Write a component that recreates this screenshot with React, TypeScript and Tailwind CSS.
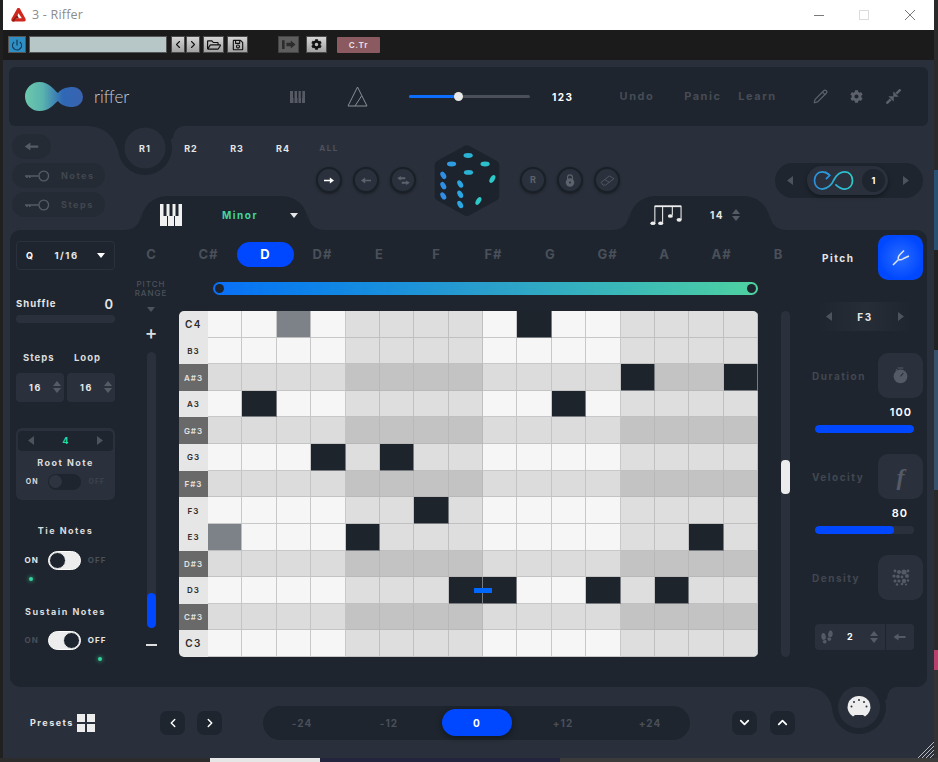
import { ReactNode } from "react";
import { FaCog, FaRegFolderOpen, FaRegSave } from "react-icons/fa";
import { IoFootsteps } from "react-icons/io5";
import { LuChevronLeft, LuChevronRight, LuChevronDown, LuChevronUp, LuPencil, LuPower } from "react-icons/lu";

const keys = ["C", "C#", "D", "D#", "E", "F", "F#", "G", "G#", "A", "A#", "B"];
const rows = ["C4", "B3", "A#3", "A3", "G#3", "G3", "F#3", "F3", "E3", "D#3", "D3", "C#3", "C3"];
const darkCells = ["0-9", "2-12", "2-15", "3-1", "3-10", "5-3", "5-5", "7-6", "8-4", "8-14", "10-7", "10-8", "10-11", "10-13"];
const greyCells = ["0-2", "8-0"];

const cellColor = (row: number, col: number) => {
  const key = `${row}-${col}`;
  if (darkCells.includes(key)) return "bg-[#1d242c] border-[#777b80]";
  if (greyCells.includes(key)) return "bg-[#7d8188] border-[#bdbdbd]";
  const sharp = rows[row].includes("#");
  const shaded = col % 8 >= 4;
  if (sharp) return shaded ? "bg-[#c3c3c3] border-[#b8b8b8]" : "bg-[#dcdcdc] border-[#c4c4c4]";
  return shaded ? "bg-[#dedede] border-[#c0c0c0]" : "bg-[#f6f6f6] border-[#c8c8c8]";
};

const Caret = ({ dir = "down", className = "" }: { dir?: "down" | "up" | "left" | "right"; className?: string }) => {
  const points = { down: "0,0 8,0 4,5", up: "0,5 8,5 4,0", left: "6,0 6,9 0,4.5", right: "0,0 6,4.5 0,9" }[dir];
  const box = dir === "left" || dir === "right" ? "0 0 6 9" : "0 0 8 5";
  const size = dir === "left" || dir === "right" ? "w-[6px] h-[9px]" : "w-[8px] h-[5px]";
  return (
    <svg viewBox={box} className={`${size} ${className}`} fill="currentColor">
      <polygon points={points} />
    </svg>
  );
};

const UpDown = () => (
  <div className="flex flex-col gap-[2px] text-[#565c66]">
    <Caret dir="up" className="w-[6px] h-[4px]" />
    <Caret dir="down" className="w-[6px] h-[4px]" />
  </div>
);

const Label = ({ children, className = "" }: { children: ReactNode; className?: string }) => (
  <span className={`text-[10px] font-bold tracking-[1.5px] leading-none whitespace-nowrap ${className}`}>{children}</span>
);

const Fillet = ({ side }: { side: "left" | "right" }) => (
  <svg
    viewBox="0 0 18 18"
    className={`absolute bottom-0 w-[18px] h-[18px] text-[#1e252e] ${side === "left" ? "-left-[18px]" : "-right-[18px]"}`}
    fill="currentColor"
  >
    {side === "left" ? <path d="M18 0 C18 12 12 18 0 18 H18 Z" /> : <path d="M0 0 C0 12 6 18 18 18 H0 Z" />}
  </svg>
);

const ToolBtn = ({ children, className = "w-[14px]" }: { children: ReactNode; className?: string }) => (
  <div className={`h-[17px] flex items-center justify-center border border-[#4a4a4a] bg-linear-to-b from-[#d6d6d6] to-[#a2a2a2] text-[#111] ${className}`}>
    {children}
  </div>
);

const RoundBtn = ({ children }: { children: ReactNode }) => (
  <div className="w-[26px] h-[26px] rounded-full bg-[#2b313c] border-[2px] border-[#1a2027] shadow-[0_1px_3px_rgba(0,0,0,0.4)] flex items-center justify-center text-[#5d636d]">
    {children}
  </div>
);

const SmallArrow = ({ className = "" }: { className?: string }) => (
  <svg viewBox="0 0 12 8" className={`w-[10px] h-[7px] ${className}`} fill="currentColor">
    <path d="M0 4 L5 0.5 V3 H12 V5 H5 V7.5 Z" />
  </svg>
);

const KeyPill = ({ label }: { label: string }) => (
  <div className="w-[93px] h-[25px] rounded-full bg-[#252b35] flex items-center pl-[13px] gap-[11px]">
    <svg viewBox="0 0 26 12" className="w-[25px] h-[12px] text-[#565c66]" fill="none" stroke="currentColor">
      <path d="M0 6 H14 M2 6 V8 M5 6 V8" strokeWidth="1.6" />
      <circle cx="19.5" cy="6" r="5" strokeWidth="1.4" />
    </svg>
    <Label className="text-[#41474f] text-[9px]! tracking-[1.4px]">{label}</Label>
  </div>
);

const Toggle = ({ on, dim = false }: { on: boolean; dim?: boolean }) => (
  <div
    className={`w-[33px] rounded-full flex items-center ${on ? "justify-start" : "justify-end"} ${
      dim ? "h-[16px] bg-[#1e252e]" : "h-[19px] bg-[#ededed] border border-white"
    }`}
  >
    <div className={`rounded-full ${dim ? "w-[13px] h-[13px] ml-[1px] bg-[#2f3540]" : "w-[17px] h-[17px] bg-[#1e252e] border border-[#ededed]"}`} />
  </div>
);

const Led = ({ className = "" }: { className?: string }) => (
  <div className={`w-[4px] h-[4px] rounded-full bg-[#35d49c] shadow-[0_0_4px_#35d49c] ${className}`} />
);

const IconBox = ({ children }: { children: ReactNode }) => (
  <div className="w-[45px] h-[45px] rounded-[10px] bg-[#2b313c] flex items-center justify-center text-[#555b66]">{children}</div>
);

const Bar = ({ value }: { value: number }) => (
  <div className="ml-[4px] w-[99px] h-[8px] rounded-full bg-[#2b313c] overflow-hidden">
    <div className="h-full rounded-full bg-[#0048ff]" style={{ width: `${value}%` }} />
  </div>
);

const Dice = () => {
  const top = [[476, 89], [426, 115], [527, 115], [477, 140]];
  const left = [[401, 149], [401, 180], [401, 211], [452, 175], [452, 206], [452, 237]];
  const right = [[549, 160], [507, 226]];
  return (
    <svg viewBox="370 55 205 222" className="w-[68px] h-[74px]">
      <polygon points="472,72 556,118 556,212 472,258 389,212 389,118" fill="#1c232c" stroke="#1c232c" strokeWidth="28" strokeLinejoin="round" />
      {top.map(([x, y]) => <ellipse key={`${x}${y}`} cx={x} cy={y} rx="14" ry="7.5" fill={x > 500 ? "#2cc0cc" : x < 450 ? "#2f9be0" : "#2ab3d5"} />)}
      {left.map(([x, y]) => <ellipse key={`${x}${y}`} cx={x} cy={y} rx="12" ry="7.5" fill={x < 420 ? "#2f8fe4" : "#2ba6e0"} transform={`rotate(60 ${x} ${y})`} />)}
      {right.map(([x, y]) => <ellipse key={`${x}${y}`} cx={x} cy={y} rx="13" ry="7" fill="#2fc8c8" transform={`rotate(-60 ${x} ${y})`} />)}
    </svg>
  );
};

const LoopIcon = () => (
  <svg viewBox="0 0 42 20" className="w-[41px] h-[19px]" fill="none" strokeWidth="1.8">
    <defs>
      <linearGradient id="loopGrad" x1="0" x2="1" y1="0" y2="0">
        <stop offset="0" stopColor="#2a90dc" />
        <stop offset="1" stopColor="#2fc9c9" />
      </linearGradient>
    </defs>
    <path d="M17 4 C14 1.5 11 1 9 1 C4 1 1 5 1 10 C1 15 4 19 9 19 C15 19 20 13 21 10 C23 6 27 1 33 1 C38 1 41 5 41 10 C41 15 38 19 33 19 C29 19 26 17 23 14" stroke="url(#loopGrad)" />
    <path d="M12 1 L17 4.5 L13 8.5" stroke="#2a90dc" />
  </svg>
);

export default function App() {
  return (
    <div className="w-[938px] h-[762px] overflow-hidden bg-[#1c1c1c] font-['Inter',sans-serif] flex flex-col">
      <div className="flex h-[758px]">
        <div className="w-[3px] bg-[#202020]" />
        <div className="w-[931px] flex flex-col">
          {/* window title */}
          <div className="h-[30px] bg-white flex items-center pl-[8px] pr-[18px]">
            <svg viewBox="0 0 16 16" className="w-[15px] h-[16px]">
              <path d="M8 0.5 C9 0.5 9.5 1 10 2 L15.5 12 C16 13.5 15.5 15 14 15 H2 C0.5 15 0 13.5 0.5 12 L6 2 C6.5 1 7 0.5 8 0.5 Z" fill="#d0281e" />
              <path d="M8 6 L11.5 11.5 H5.5 Z" fill="#fff" />
              <path d="M1 14 L6.5 8 L8.5 11.5 H5 L3.5 15 H2 Z" fill="#8d1b14" />
            </svg>
            <span className="ml-[6px] text-[12.5px] text-[#8c8c8c] font-['Open_Sans',sans-serif] tracking-[0.2px]">3 - Riffer</span>
            <svg viewBox="0 0 102 12" className="ml-auto w-[102px] h-[12px]" fill="none">
              <path d="M0 6.5 H10" stroke="#7a7a7a" />
              <rect x="45.5" y="1.5" width="9" height="9" stroke="#dcdcdc" />
              <path d="M91 1 L101 11 M101 1 L91 11" stroke="#7a7a7a" />
            </svg>
          </div>

          {/* host toolbar */}
          <div className="h-[30px] bg-[#1b1b1b] flex items-center pl-[5px] pb-[1px]">
            <div className="w-[18px] h-[17px] flex items-center justify-center bg-[#2f8fc4] border border-[#555] text-[#123a55]">
              <LuPower size={12} strokeWidth={2.5} />
            </div>
            <div className="ml-[3px] w-[138px] h-[17px] bg-[#b7c6c6] border border-[#555]" />
            <ToolBtn className="ml-[4px] w-[14px]"><LuChevronLeft size={15} strokeWidth={2.2} /></ToolBtn>
            <ToolBtn className="ml-[1px] w-[14px]"><LuChevronRight size={15} strokeWidth={2.2} /></ToolBtn>
            <ToolBtn className="ml-[3px] w-[21px]"><FaRegFolderOpen size={14} /></ToolBtn>
            <ToolBtn className="ml-[3px] w-[21px]"><FaRegSave size={12} /></ToolBtn>
            <div className="ml-[30px] w-[21px] h-[17px] flex items-center justify-center border border-[#444] bg-[#5e5e5e] text-[#2c2c2c]">
              <svg viewBox="0 0 16 10" className="w-[14px] h-[9px]" fill="currentColor">
                <path d="M0 0 H3 V10 H0 Z M5 3 H10 V0.5 L15.5 5 L10 9.5 V7 H5 Z" />
              </svg>
            </div>
            <ToolBtn className="ml-[7px] w-[21px]"><FaCog size={11} /></ToolBtn>
            <div className="ml-[10px] w-[43px] h-[16px] flex items-center justify-center rounded-[1px] bg-[#8b5a60] text-[8px] font-bold tracking-[0.8px] text-[#e8dcdc]">C.Tr</div>
          </div>

          {/* plugin */}
          <div className="relative h-[698px] bg-[#2a303b] px-[6px] pt-[7px]">
            {/* header */}
            <div className="h-[59px] rounded-[6px] bg-[#1e252e] flex items-center">
              <svg viewBox="0 0 59 30" className="ml-[16px] w-[59px] h-[30px]">
                <defs>
                  <linearGradient id="logoGrad" x1="0" x2="1" y1="0" y2="0">
                    <stop offset="0" stopColor="#6cc8ac" />
                    <stop offset="0.3" stopColor="#5ab4ae" />
                    <stop offset="0.65" stopColor="#2f68b5" />
                    <stop offset="1" stopColor="#3a62b0" />
                  </linearGradient>
                </defs>
                <path d="M14.5 0 C24 0 28 7 33 11 C36 7 41 5 48 5 A10 10 0 0 1 48 25 C41 25 36 23 33 19 C28 23 24 29 14.5 29 A14.5 14.5 0 0 1 14.5 0 Z" fill="url(#logoGrad)" />
              </svg>
              <span className="ml-[10px] w-[36px] text-[17px] leading-none font-['Lato',sans-serif] font-light text-[#c9cdd2]">riffer</span>
              <svg viewBox="0 0 15 12" className="ml-[160px] w-[15px] h-[12px] text-[#555a63]" fill="currentColor">
                <path d="M0 0 H15 V12 H0 Z" />
                <path d="M4 12 V7 M8 12 V7 M11.5 12 V7" stroke="#1e252e" />
                <path d="M3 0 H4.5 V7 H3 Z M7 0 H8.5 V7 H7 Z M10.8 0 H12.3 V7 H10.8 Z" fill="#1e252e" />
              </svg>
              <svg viewBox="0 0 21 21" className="ml-[42px] w-[21px] h-[21px] text-[#8a8f96]" fill="none" stroke="currentColor">
                <path d="M10.5 1 L20 20 H1 Z M14.5 10 L8 20" />
              </svg>
              <div className="ml-[41px] w-[121px] h-[3px] rounded-full bg-[#4a4f5a] relative">
                <div className="h-full w-[50px] rounded-full bg-[#0d6efd]" />
                <div className="absolute left-[45px] -top-[3px] w-[9px] h-[9px] rounded-full bg-[#e8e8e8]" />
              </div>
              <Label className="ml-[22px] text-white tracking-[1.2px]">123</Label>
              <Label className="ml-[46px] text-[#474c56] text-[11px]!">Undo</Label>
              <Label className="ml-[30px] text-[#474c56] text-[11px]!">Panic</Label>
              <Label className="ml-[17px] text-[#474c56] text-[11px]!">Learn</Label>
              <LuPencil size={15} className="ml-[36px] text-[#5c616b]" />
              <FaCog size={13} className="ml-[22px] text-[#5c616b]" />
              <svg viewBox="0 0 16 16" className="ml-[23px] w-[15px] h-[15px] text-[#5c616b]" fill="currentColor" stroke="currentColor">
                <path d="M15.5 0.5 L11 5" strokeWidth="2.6" />
                <path d="M0.5 15.5 L5 11" strokeWidth="2.6" />
                <path d="M8 8 V3 L13 8 Z M8 8 H3 L8 13 Z" strokeWidth="0.5" />
              </svg>
            </div>

            {/* rack row */}
            <div className="relative h-[104px] flex">
              {/* notch behind R1 */}
              <svg viewBox="0 0 100 60" className="absolute left-[76px] top-0 w-[100px] h-[60px] text-[#1e252e]" fill="currentColor">
                <path d="M0 0 H100 Q90 0 88 12 L60 30 L33 24 C28 8 18 0 0 0 Z" />
                <circle cx="60" cy="22" r="27" />
                <circle cx="60" cy="22" r="20.5" fill="#2a303b" />
              </svg>

              <div className="w-[113px] pl-[3px] pt-[8px] flex flex-col gap-[4px]">
                <div className="w-[39px] h-[25px] rounded-full bg-[#252b35] flex items-center justify-center text-[#565c66]">
                  <SmallArrow className="w-[17px] h-[9px]" />
                </div>
                <KeyPill label="Notes" />
                <KeyPill label="Steps" />
              </div>

              <div className="relative w-[298px]">
                <div className="h-[41px] pt-[3px] grid grid-cols-[repeat(5,46px)] items-center justify-items-center">
                  {["R1", "R2", "R3", "R4"].map((r) => (
                    <Label key={r} className="text-[#e6e6e6] text-[9px]! tracking-[1px]">{r}</Label>
                  ))}
                  <Label className="text-[#4d525c] text-[8px]!">ALL</Label>
                </div>
                <div className="ml-[194px] flex gap-[11px]">
                  <RoundBtn><SmallArrow className="text-white rotate-180" /></RoundBtn>
                  <RoundBtn><SmallArrow /></RoundBtn>
                  <RoundBtn>
                    <svg viewBox="0 0 14 10" className="w-[13px] h-[9px]" fill="currentColor">
                      <path d="M0 2.5 L4 0 V1.5 H9 V3.5 H4 V5 Z M14 7.5 L10 5 V6.5 H5 V8.5 H10 V10 Z" />
                    </svg>
                  </RoundBtn>
                </div>
                <div className="relative mt-[3px] ml-[19px] w-[167px] h-[34px] pt-[4px] rounded-t-[26px] bg-[#1e252e] flex items-center">
                  <Fillet side="left" />
                  <Fillet side="right" />
                  <svg viewBox="0 0 22 22" className="ml-[19px] w-[22px] h-[22px] text-[#f0f0f0]" fill="currentColor">
                    <path d="M0 0 H22 V22 H0 Z" />
                    <path d="M3.5 0 H6.5 V12 H3.5 Z M9.5 0 H12.5 V12 H9.5 Z M15.5 0 H18.5 V12 H15.5 Z" fill="#1e252e" />
                    <path d="M7 12 H8 V22 H7 Z M14 12 H15 V22 H14 Z" fill="#1e252e" />
                  </svg>
                  <Label className="ml-[40px] text-[#43d6a0]">Minor</Label>
                  <Caret className="ml-[32px] text-[#e6e6e6]" />
                </div>
              </div>

              <div className="ml-[13px] mt-[18px] h-[74px]">
                <Dice />
              </div>

              <div className="ml-[19px] w-[250px]">
                <div className="mt-[41px] flex gap-[11px]">
                  <RoundBtn><span className="text-[9px] font-bold">R</span></RoundBtn>
                  <RoundBtn>
                    <svg viewBox="0 0 12 16" className="w-[10px] h-[13px]" fill="currentColor">
                      <path d="M3 7 V4 A3 3 0 0 1 9 4 V7" fill="none" stroke="currentColor" strokeWidth="1.4" />
                      <circle cx="6" cy="10.5" r="5.2" />
                      <circle cx="6" cy="10.5" r="1.3" fill="#2b313c" />
                    </svg>
                  </RoundBtn>
                  <RoundBtn>
                    <svg viewBox="0 0 16 12" className="w-[15px] h-[11px]" fill="none" stroke="currentColor" strokeWidth="0.8">
                      <path d="M1 8 L10 1 L15 4 L6 11 H3 Z M5 5 L10 8" />
                    </svg>
                  </RoundBtn>
                </div>
                <div className="relative mt-[3px] ml-[109px] w-[141px] h-[34px] pt-[4px] rounded-t-[26px] bg-[#1e252e] flex items-center">
                  <Fillet side="left" />
                  <Fillet side="right" />
                  <svg viewBox="0 0 34 22" className="ml-[21px] w-[33px] h-[22px] text-[#ececec]" fill="none" stroke="currentColor">
                    <path d="M5 19 V2 H32 V16 M13 19 V2 M23 11 V2" strokeWidth="1.1" />
                    <path d="M5 2 H32" strokeWidth="1.8" />
                    <g fill="currentColor" stroke="none">
                      <ellipse cx="3" cy="19.5" rx="2.6" ry="1.9" />
                      <ellipse cx="11" cy="19.5" rx="2.6" ry="1.9" />
                      <ellipse cx="21" cy="12" rx="2.6" ry="1.9" />
                      <ellipse cx="30" cy="16" rx="2.6" ry="1.9" />
                    </g>
                  </svg>
                  <Label className="ml-[27px] text-[#e6e6e6] tracking-[0.8px]">14</Label>
                  <div className="ml-[8px]"><UpDown /></div>
                </div>
              </div>

              <div className="ml-[5px] mt-[37px] w-[148px] h-[35px] rounded-full bg-[#1e252e] flex items-center text-[#4d535d]">
                <Caret dir="left" className="ml-[12px]" />
                <div className="ml-[14px] w-[81px] h-[29px] rounded-full bg-[#2b313c] shadow-[0_2px_4px_rgba(0,0,0,0.35)] flex items-center pl-[6px]">
                  <LoopIcon />
                  <div className="ml-[8px] w-[23px] h-[23px] rounded-full bg-[#1e252e] flex items-center justify-center text-[9px] font-bold text-white">1</div>
                </div>
                <Caret dir="right" className="ml-[15px]" />
              </div>
            </div>

            {/* main panel */}
            <div className="ml-[1px] w-[917px] h-[457px] rounded-[10px] bg-[#1e252e] flex relative">
              {/* left column */}
              <div className="w-[113px] pl-[6px] pr-[8px] pt-[11px] flex flex-col">
                <div className="h-[29px] rounded-[4px] border border-[#2b313c] flex items-center pl-[9px] text-white">
                  <Label className="text-[9px]! tracking-[0.5px]">Q</Label>
                  <Label className="ml-[20px] text-[9.5px]! tracking-[0.5px] text-[#e8e8e8]">1/16</Label>
                  <Caret className="ml-auto mr-[9px]" />
                </div>
                <div className="mt-[26px] flex items-center justify-between h-[16px]">
                  <Label className="text-[#e6e6e6] text-[9.5px]! tracking-[1px]">Shuffle</Label>
                  <span className="text-[13px] font-semibold leading-none mr-[2px] text-[#e6e6e6]">0</span>
                </div>
                <div className="mt-[3px] h-[8px] rounded-full bg-[#2b313c]" />
                <div className="mt-[30px] flex text-[#dcdcdc]">
                  <Label className="ml-[7px] text-[9.5px]! tracking-[1px] w-[51px]">Steps</Label>
                  <Label className="text-[9.5px]! tracking-[1px]">Loop</Label>
                </div>
                <div className="mt-[10px] flex gap-[3px]">
                  {[0, 1].map((i) => (
                    <div key={i} className="w-[48px] h-[29px] rounded-[4px] bg-[#2b313c] flex items-center pl-[13px] text-[#e8e8e8]">
                      <Label className="tracking-[0.5px] text-[9px]!">16</Label>
                      <div className="ml-[11px]"><UpDown /></div>
                    </div>
                  ))}
                </div>
                <div className="mt-[26px] h-[72px] rounded-[6px] bg-[#2b313c] px-[2px] pt-[3px] flex flex-col items-center">
                  <div className="w-full h-[20px] rounded-[4px] bg-[#1e252e] flex items-center justify-between px-[10px] text-[#4d535d]">
                    <Caret dir="left" />
                    <span className="text-[9px] font-bold text-[#1fe0a8]">4</span>
                    <Caret dir="right" />
                  </div>
                  <Label className="mt-[7px] text-[#dcdcdc] text-[9px]!">Root Note</Label>
                  <div className="mt-[7px] flex items-center">
                    <Label className="text-[#d8d8d8] text-[7px]! tracking-[1px] mr-[9px]">ON</Label>
                    <Toggle on dim />
                    <Label className="text-[#3c424c] text-[7px]! tracking-[1px] ml-[8px]">OFF</Label>
                  </div>
                </div>
                <Label className="mt-[26px] text-center text-[#dcdcdc] text-[9px]!">Tie Notes</Label>
                <div className="mt-[16px] flex items-center justify-center">
                  <Label className="text-[#e6e6e6] text-[8px]! tracking-[1px] mr-[9px]">ON</Label>
                  <Toggle on />
                  <Label className="text-[#4a4f59] text-[8px]! tracking-[1px] ml-[7px]">OFF</Label>
                </div>
                <Led className="mt-[7px] ml-[13px]" />
                <Label className="mt-[26px] text-center text-[#dcdcdc] text-[9px]!">Sustain Notes</Label>
                <div className="mt-[15px] flex items-center justify-center">
                  <Label className="text-[#4a4f59] text-[8px]! tracking-[1px] mr-[9px]">ON</Label>
                  <Toggle on={false} />
                  <Label className="text-[#e6e6e6] text-[8px]! tracking-[1px] ml-[7px]">OFF</Label>
                </div>
                <Led className="mt-[7px] ml-[82px]" />
              </div>

              {/* center column */}
              <div className="w-[688px] flex flex-col">
                <div className="mt-[12px] w-[684px] h-[25px] grid grid-cols-12">
                  {keys.map((k) => (
                    <div
                      key={k}
                      className={`flex items-center justify-center text-[13px] font-bold tracking-[1px] ${
                        k === "D" ? "rounded-full bg-[#0048ff] text-white" : "text-[#4a505a]"
                      }`}
                    >
                      {k}
                    </div>
                  ))}
                </div>
                <div className="mt-[11px] flex">
                  <div className="w-[56px] flex flex-col items-center text-[#4d525c]">
                    <div className="mt-[2px] text-[8px] leading-[9px] tracking-[1px] text-center font-medium">PITCH<br />RANGE</div>
                    <Caret className="mt-[9px] text-[#4d525c]" />
                    <span className="mt-[14px] text-[19px] leading-[14px] text-[#dedede] font-medium">+</span>
                    <div className="mt-[12px] relative w-[9px] h-[276px] rounded-full bg-[#2b313c]">
                      <div className="absolute bottom-0 w-full h-[35px] rounded-full bg-[#0048ff]" />
                    </div>
                    <div className="mt-[16px] w-[11px] h-[2px] bg-[#dedede]" />
                  </div>

                  <div className="w-[632px]">
                    <div className="relative mt-[4px] ml-[34px] w-[545px] h-[13px] rounded-full bg-linear-to-r from-[#0b6ff8] via-[#2a9ecb] to-[#4fd1a0]">
                      <div className="absolute left-[2px] top-[2px] w-[9px] h-[9px] rounded-full bg-[#1e252e]" />
                      <div className="absolute right-[2px] top-[2px] w-[9px] h-[9px] rounded-full bg-[#1e252e]" />
                    </div>
                    <div className="mt-[16px] flex">
                      <div className="w-[579px] h-[346px] rounded-[5px] overflow-hidden grid grid-cols-[29px_repeat(16,1fr)] grid-rows-[repeat(13,1fr)]">
                        {rows.map((r, row) => (
                          <div key={r} className="contents">
                            <div
                              className={`flex items-center justify-center font-semibold ${
                                r.includes("#") ? "bg-[#696969] text-[#e2e2e2]" : "bg-[#e6e6e6] text-[#2a2a2a]"
                              } ${r === "C4" || r === "C3" ? "text-[10px] tracking-[1.5px]" : "text-[8px] tracking-[1px]"}`}
                            >
                              {r}
                            </div>
                            {Array.from({ length: 16 }).map((_, col) => (
                              <div key={col} className={`relative border-r border-b ${cellColor(row, col)}`}>
                                {row === 10 && col === 8 && (
                                  <div className="absolute -left-[9px] top-[11px] w-[18px] h-[5px] bg-[#0067ff]" />
                                )}
                              </div>
                            ))}
                          </div>
                        ))}
                      </div>
                      <div className="ml-[23px] relative w-[9px] h-[346px] rounded-full bg-[#2b313c]">
                        <div className="absolute top-[149px] w-full h-[34px] rounded-[4px] bg-[#ececec]" />
                      </div>
                    </div>
                  </div>
                </div>
              </div>

              {/* right column */}
              <div className="w-[116px] flex flex-col">
                <div className="mt-[5px] flex items-center">
                  <Label className="ml-[11px] text-[#e6e6e6]">Pitch</Label>
                  <div className="ml-auto mr-[4px] w-[45px] h-[45px] rounded-[10px] bg-[radial-gradient(circle,#2a6cff_0%,#0048ff_70%)] flex items-center justify-center text-[#dfe6f5]">
                    <svg viewBox="0 0 18 16" className="w-[18px] h-[16px]" fill="none" stroke="currentColor" strokeWidth="1.5">
                      <path d="M1 15 L6.5 9.5 M6.5 9.5 C5.5 7 6.5 6 8 4.5 L12 0.5 M6.5 9.5 C9 10.5 10 9.5 11.5 8.5 L17 6" />
                    </svg>
                  </div>
                </div>
                <div className="mt-[22px] ml-[6px] w-[96px] h-[29px] bg-linear-to-r from-[#1e252e] via-[#272d37] to-[#1e252e] flex items-center justify-between px-[9px] text-[#4d535d]">
                  <Caret dir="left" />
                  <Label className="text-[#e6e6e6]">F3</Label>
                  <Caret dir="right" />
                </div>
                <div className="mt-[22px] flex items-center justify-between pl-[1px] pr-[4px]">
                  <Label className="text-[#424751]">Duration</Label>
                  <IconBox>
                    <svg viewBox="0 0 16 18" className="w-[15px] h-[17px]" fill="currentColor">
                      <path d="M5 0.5 H11 V1.5 H5 Z M4 2 L5 2.8 L3.6 4 L2.6 3 Z" />
                      <circle cx="8" cy="10" r="7.3" />
                      <path d="M8 10 L11 6.5" stroke="#2b313c" strokeWidth="1.2" />
                    </svg>
                  </IconBox>
                </div>
                <div className="mt-[6px] mr-[15px] h-[16px] flex items-center justify-end">
                  <span className="text-[11px] font-semibold tracking-[1px] text-white">100</span>
                </div>
                <div className="mt-[5px]"><Bar value={100} /></div>
                <div className="mt-[21px] flex items-center justify-between pl-[1px] pr-[4px]">
                  <Label className="text-[#424751]">Velocity</Label>
                  <IconBox><span className="font-['Liberation_Serif',serif] italic font-bold text-[24px] leading-none">f</span></IconBox>
                </div>
                <div className="mt-[6px] mr-[19px] h-[16px] flex items-center justify-end">
                  <span className="text-[11px] font-semibold tracking-[1px] text-white">80</span>
                </div>
                <div className="mt-[5px]"><Bar value={80} /></div>
                <div className="mt-[21px] flex items-center justify-between pl-[1px] pr-[4px]">
                  <Label className="text-[#424751]">Density</Label>
                  <IconBox>
                    <svg viewBox="0 0 18 17" className="w-[18px] h-[17px]" fill="currentColor">
                      {[[3, 2, 1.4], [7, 3, 2], [12, 3, 2.6], [16, 2, 1.4], [2, 7, 1.6], [6, 7.5, 1.8], [10, 8, 1.4], [15, 7, 2], [3, 12, 1.5], [7, 12, 1.6], [12, 12, 2.2], [16, 11.5, 1.2], [5, 15.5, 1.2], [10, 15, 1.3], [14, 15.5, 1.1]].map(([x, y, r]) => (
                        <circle key={`${x}-${y}`} cx={x} cy={y} r={r} />
                      ))}
                    </svg>
                  </IconBox>
                </div>
                <div className="mt-[24px] ml-[4px] w-[99px] h-[26px] rounded-[4px] bg-[#2b313c] flex items-center text-[#555b66]">
                  <IoFootsteps size={14} className="ml-[5px]" />
                  <span className="ml-[13px] text-[9px] font-bold text-white">2</span>
                  <div className="ml-[17px]"><UpDown /></div>
                  <div className="ml-[7px] w-[1px] h-full bg-[#1e252e]" />
                  <SmallArrow className="ml-[6px] w-[15px] h-[8px]" />
                </div>
              </div>
            </div>

            {/* footer */}
            <div className="relative h-[71px] flex items-center">
              {/* midi socket, joined to the panel above */}
              <svg viewBox="0 0 110 50" className="absolute left-[781px] top-0 w-[110px] h-[50px] text-[#1e252e]" fill="currentColor">
                <path d="M13 0 H107 Q98 0 97 12 L70 30 L42 20 C38 6 30 0 13 0 Z" />
                <circle cx="69" cy="20" r="27" />
                <circle cx="69" cy="20" r="21" fill="#2a303b" />
                <path d="M69 9 A11 11 0 0 1 75 29.5 L73 28 H65 L63 29.5 A11 11 0 0 1 69 9 Z" fill="#ededed" />
                <g fill="#2a303b">
                  <circle cx="69" cy="13" r="1" />
                  <circle cx="64" cy="15" r="1" />
                  <circle cx="74" cy="15" r="1" />
                  <circle cx="61.5" cy="19.5" r="1" />
                  <circle cx="76.5" cy="19.5" r="1" />
                </g>
              </svg>
              <Label className="ml-[21px] w-[42px] text-[#e6e6e6] text-[9px]! tracking-[0.7px]">Presets</Label>
              <div className="ml-[5px] grid grid-cols-2 gap-[2px] w-[18px] h-[18px]">
                {[0, 1, 2, 3].map((i) => <div key={i} className="bg-[#ededed]" />)}
              </div>
              <div className="ml-[65px] w-[25px] h-[24px] rounded-[7px] bg-[#1e252e] flex items-center justify-center text-white">
                <LuChevronLeft size={14} strokeWidth={2.5} />
              </div>
              <div className="ml-[12px] w-[25px] h-[24px] rounded-[7px] bg-[#1e252e] flex items-center justify-center text-white">
                <LuChevronRight size={14} strokeWidth={2.5} />
              </div>
              <div className="ml-[41px] w-[427px] h-[34px] rounded-full bg-[#1e252e] grid grid-cols-[78px_96px_79px_94px_80px] items-center text-[#4a505a]">
                <Label className="text-center tracking-[1px]">-24</Label>
                <Label className="text-center tracking-[1px]">-12</Label>
                <div className="ml-[5px] w-[70px] h-[27px] rounded-full bg-[#0048ff] shadow-[0_2px_6px_rgba(0,0,0,0.4)] flex items-center justify-center">
                  <Label className="text-white">0</Label>
                </div>
                <Label className="text-center tracking-[1px]">+12</Label>
                <Label className="text-center tracking-[1px]">+24</Label>
              </div>
              <div className="ml-[42px] w-[25px] h-[24px] rounded-[7px] bg-[#1e252e] flex items-center justify-center text-white">
                <LuChevronDown size={15} strokeWidth={2.8} />
              </div>
              <div className="ml-[13px] w-[25px] h-[24px] rounded-[7px] bg-[#1e252e] flex items-center justify-center text-white">
                <LuChevronUp size={15} strokeWidth={2.8} />
              </div>
            </div>

            {/* resize grip */}
            <svg viewBox="0 0 16 16" className="absolute right-0 bottom-0 w-[16px] h-[16px]" stroke="#b9b9b9" strokeWidth="1">
              <path d="M0 16 L16 0 M4 16 L16 4 M8 16 L16 8 M12 16 L16 12" />
            </svg>
          </div>
        </div>
        <div className="w-[4px] flex flex-col">
          <div className="h-[170px] bg-[#2a2a2a]" />
          <div className="h-[80px] bg-[#2b4f6e]" />
          <div className="h-[100px] bg-[#222]" />
          <div className="h-[140px] bg-[#39506a]" />
          <div className="h-[160px] bg-[#2a2a2a]" />
          <div className="h-[20px] bg-[#b8406a]" />
          <div className="h-[88px] bg-[#333]" />
        </div>
      </div>
      <div className="h-[4px] flex">
        <div className="w-[210px] bg-[#2c2c2c]" />
        <div className="w-[110px] bg-[#e6e6e6]" />
        <div className="w-[240px] bg-[#23243e]" />
        <div className="w-[378px] bg-[#3b3b3b]" />
      </div>
    </div>
  );
}
